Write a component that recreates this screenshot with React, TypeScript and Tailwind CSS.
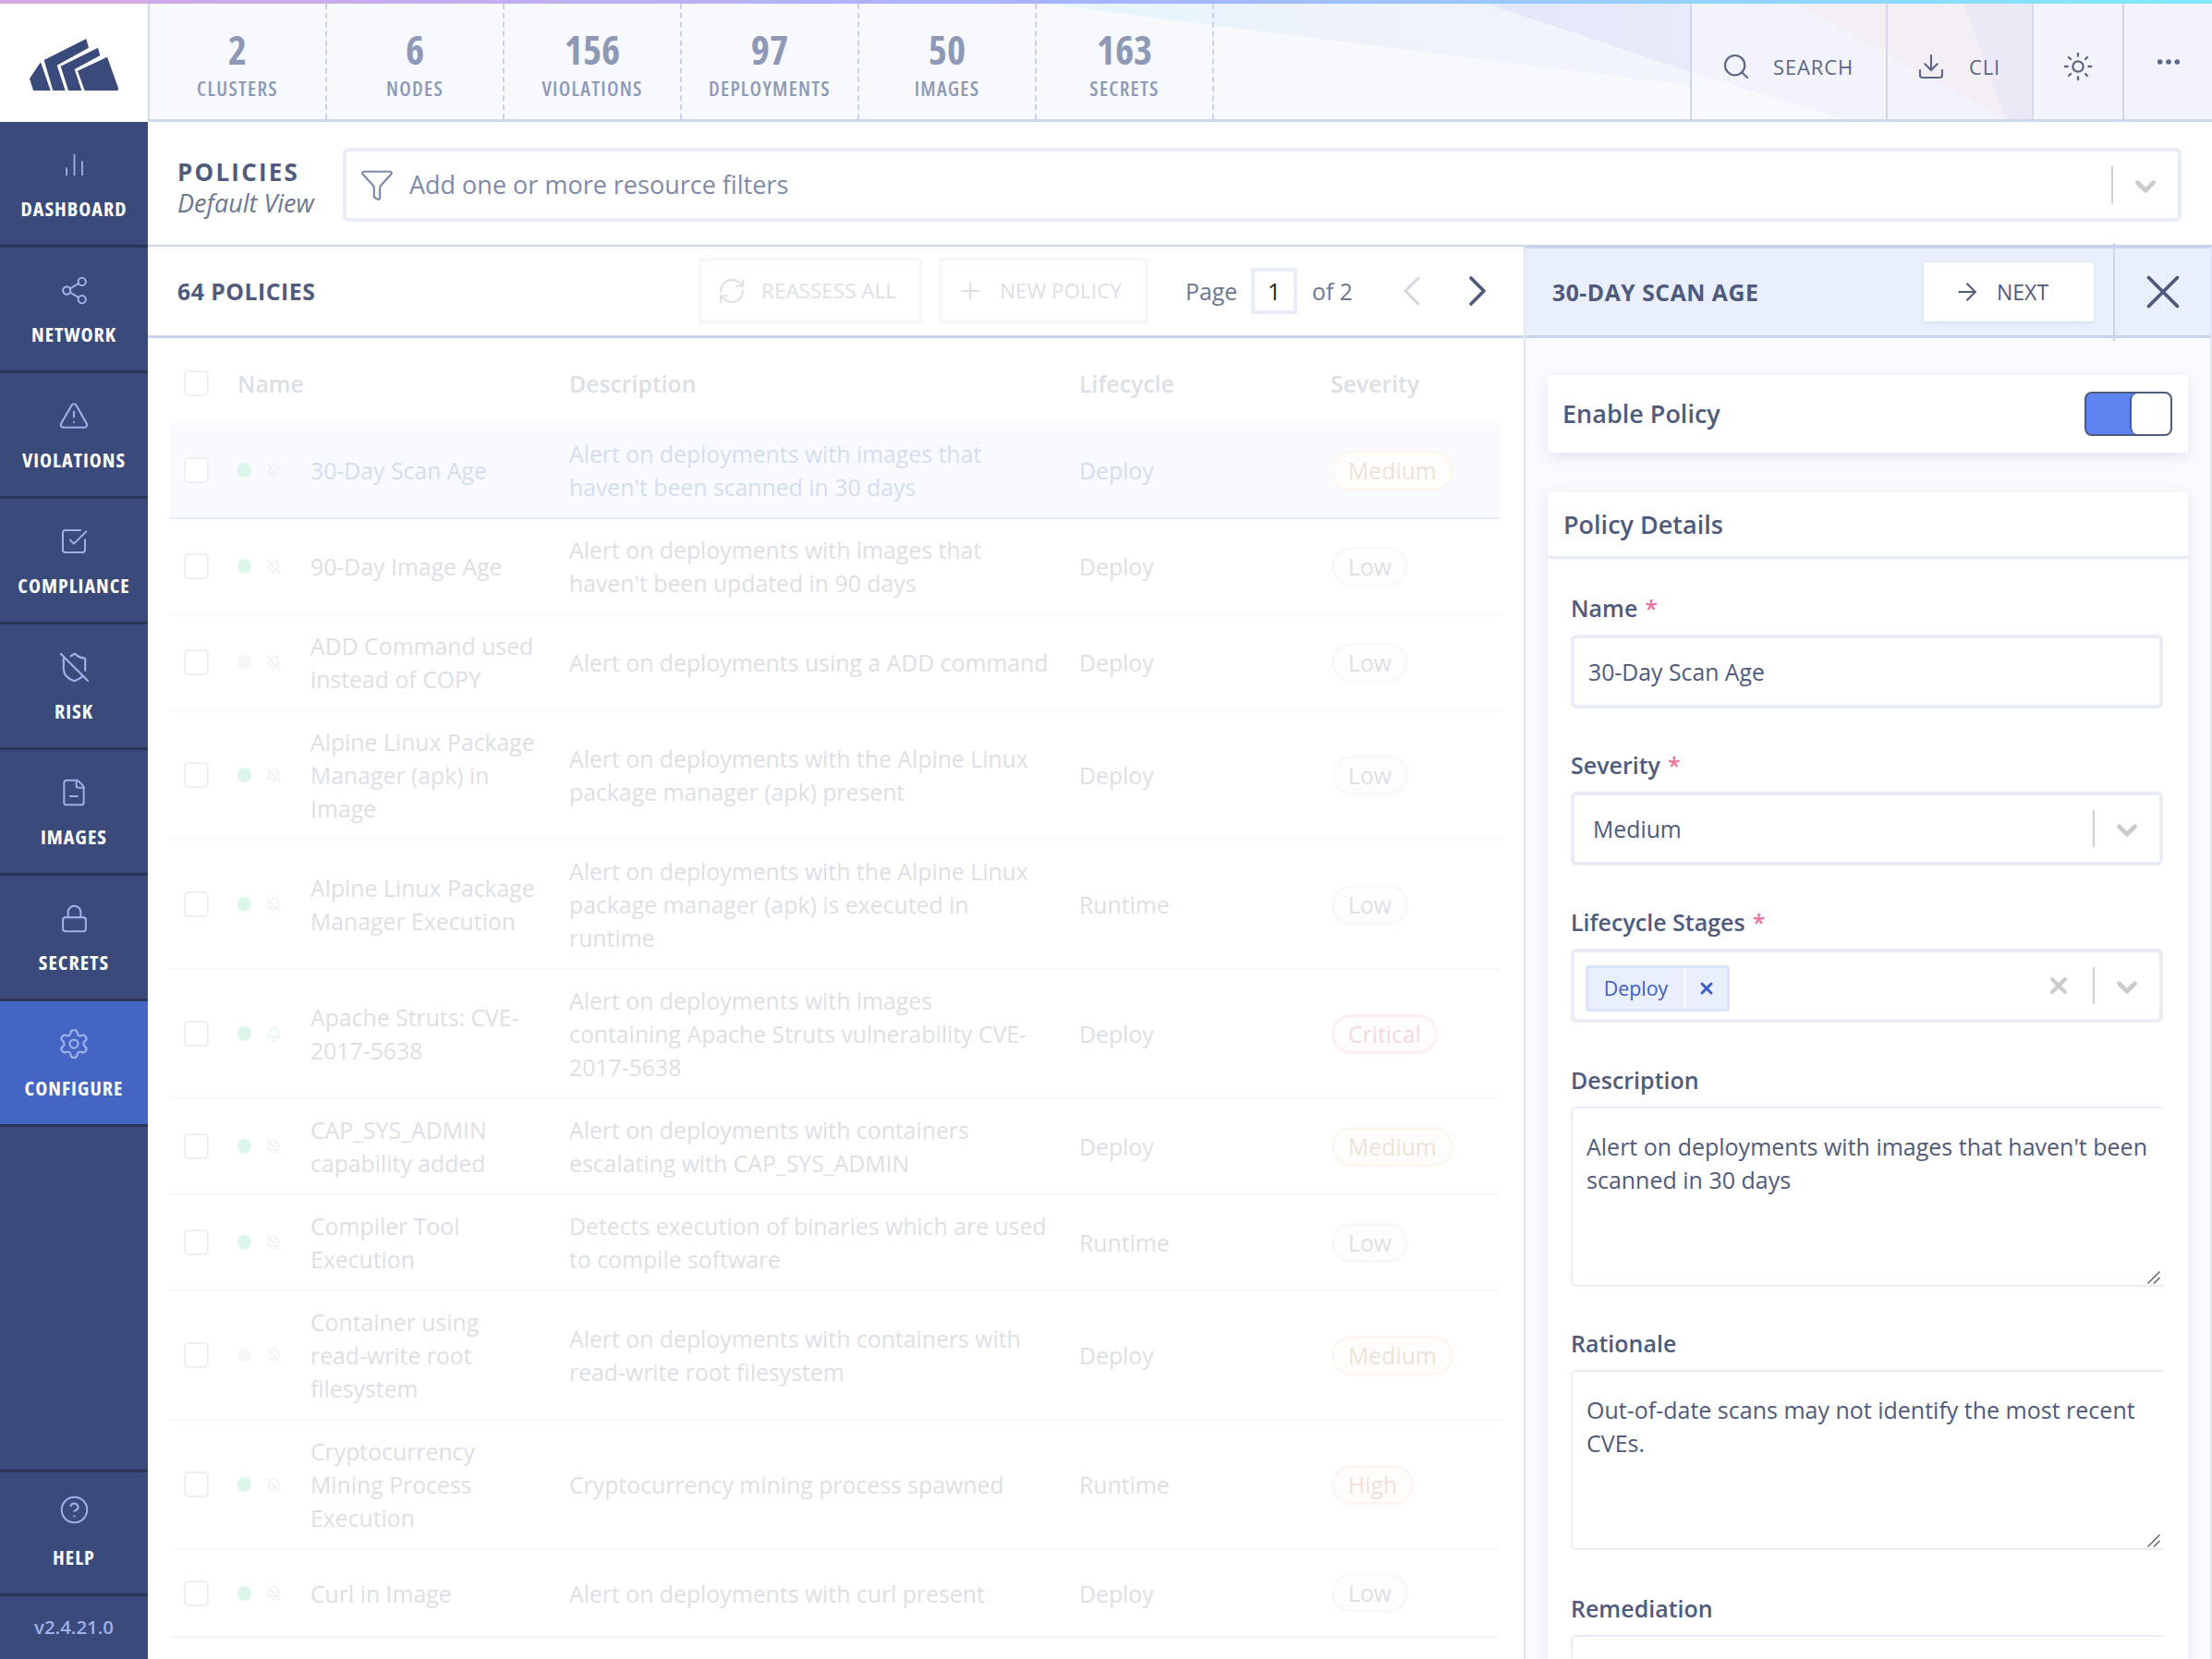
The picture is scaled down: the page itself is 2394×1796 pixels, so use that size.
import {
  ArrowRight,
  Bell,
  BellOff,
  ChartNoAxesColumn,
  ChevronDown,
  ChevronLeft,
  ChevronRight,
  CircleHelp,
  Download,
  Ellipsis,
  FileMinus,
  Funnel,
  Lock,
  Plus,
  RefreshCw,
  Search,
  Settings,
  Share2,
  ShieldOff,
  SquareCheckBig,
  Sun,
  TriangleAlert,
  X,
} from "lucide-react";

const stats = [
  ["2", "CLUSTERS"],
  ["6", "NODES"],
  ["156", "VIOLATIONS"],
  ["97", "DEPLOYMENTS"],
  ["50", "IMAGES"],
  ["163", "SECRETS"],
];

const navItems = [
  { label: "DASHBOARD", icon: ChartNoAxesColumn, size: 29 },
  { label: "NETWORK", icon: Share2, size: 33 },
  { label: "VIOLATIONS", icon: TriangleAlert, size: 34 },
  { label: "COMPLIANCE", icon: SquareCheckBig, size: 32 },
  { label: "RISK", icon: ShieldOff, size: 35 },
  { label: "IMAGES", icon: FileMinus, size: 32 },
  { label: "SECRETS", icon: Lock, size: 33 },
  { label: "CONFIGURE", icon: Settings, size: 36, active: true },
];

type Policy = {
  name: string;
  description: string;
  lifecycle: string;
  severity: "Low" | "Medium" | "High" | "Critical";
  disabled?: boolean;
  notify?: boolean;
};

const policies: Policy[] = [
  { name: "30-Day Scan Age", description: "Alert on deployments with images that haven't been scanned in 30 days", lifecycle: "Deploy", severity: "Medium" },
  { name: "90-Day Image Age", description: "Alert on deployments with images that haven't been updated in 90 days", lifecycle: "Deploy", severity: "Low" },
  { name: "ADD Command used instead of COPY", description: "Alert on deployments using a ADD command", lifecycle: "Deploy", severity: "Low", disabled: true },
  { name: "Alpine Linux Package Manager (apk) in Image", description: "Alert on deployments with the Alpine Linux package manager (apk) present", lifecycle: "Deploy", severity: "Low" },
  { name: "Alpine Linux Package Manager Execution", description: "Alert on deployments with the Alpine Linux package manager (apk) is executed in runtime", lifecycle: "Runtime", severity: "Low" },
  { name: "Apache Struts: CVE-2017-5638", description: "Alert on deployments with images containing Apache Struts vulnerability CVE-2017-5638", lifecycle: "Deploy", severity: "Critical", notify: true },
  { name: "CAP_SYS_ADMIN capability added", description: "Alert on deployments with containers escalating with CAP_SYS_ADMIN", lifecycle: "Deploy", severity: "Medium" },
  { name: "Compiler Tool Execution", description: "Detects execution of binaries which are used to compile software", lifecycle: "Runtime", severity: "Low" },
  { name: "Container using read-write root filesystem", description: "Alert on deployments with containers with read-write root filesystem", lifecycle: "Deploy", severity: "Medium", disabled: true },
  { name: "Cryptocurrency Mining Process Execution", description: "Cryptocurrency mining process spawned", lifecycle: "Runtime", severity: "High" },
  { name: "Curl in Image", description: "Alert on deployments with curl present", lifecycle: "Deploy", severity: "Low" },
];

const severityStyles = {
  Low: "border-[#dfe2ea] bg-[#fafafc] text-[#5b6680]",
  Medium: "border-[#f9dcb4] bg-[#fffaf3] text-[#a0713c]",
  High: "border-[#f9d3c0] bg-[#fff8f4] text-[#c8623c]",
  Critical: "border-[#f6b4c0] bg-[#fff5f6] text-[#c84560]",
};

const Logo = () => (
  <svg viewBox="0 0 360 240" className="w-[120px] h-[80px] mt-[4px]" fill="#3a4b7b">
    <polygon points="36,165 72,112 104,204 48,204" />
    <polygon points="83,105 220,36 228,65 125,122 152,204 112,204" />
    <polygon points="137,125 258,65 265,90 182,135 205,204 162,204" />
    <polygon points="192,140 288,95 325,198 322,204 215,204" />
  </svg>
);

const HeaderShards = () => (
  <svg className="absolute inset-0 w-full h-full" viewBox="160 4 2234 128" preserveAspectRatio="none">
    <defs>
      <linearGradient id="shardA" x1="0" x2="1" y1="0" y2="0">
        <stop offset="0" stopColor="#e4f6fd" />
        <stop offset="0.45" stopColor="#eef2fb" />
        <stop offset="1" stopColor="#f3f5fc" />
      </linearGradient>
      <linearGradient id="shardB" x1="0" x2="1" y1="0" y2="0">
        <stop offset="0" stopColor="#e3e7f9" />
        <stop offset="1" stopColor="#e8ebf9" />
      </linearGradient>
    </defs>
    <polygon points="1130,4 1608,4 1830,80 1830,95" fill="url(#shardA)" />
    <polygon points="1608,4 1830,4 1830,80" fill="url(#shardB)" />
    <polygon points="1830,4 2394,4 2394,132 1996,132 1830,80" fill="#f2f3fb" />
    <polygon points="1942,4 2125,4 2171,132" fill="#f4eef5" />
    <polygon points="2125,4 2199,4 2199,132 2171,132" fill="#ebe9f5" />
  </svg>
);

const Checkbox = () => (
  <div className="w-[27px] h-[28px] shrink-0 rounded-[5px] border-2 border-[#a9b1c4] bg-white" />
);

const SelectArrow = () => (
  <div className="flex items-center shrink-0">
    <div className="w-[2px] h-[40px] bg-[#cfcfcf]" />
    <div className="w-[70px] flex justify-center pt-[4px]">
      <ChevronDown size={34} strokeWidth={3.4} className="text-[#cccccc]" />
    </div>
  </div>
);

const FieldLabel = ({ text, required }: { text: string; required?: boolean }) => (
  <div className="h-[36px] leading-[36px] text-[25px] font-semibold text-[#4f5b7c] mb-[11px]">
    {text}
    {required && <span className="ml-[8px] text-[#e8739b]">*</span>}
  </div>
);

const TextBox = ({ value }: { value: string }) => (
  <div className="relative">
    <textarea
      readOnly
      defaultValue={value}
      className="block w-full h-[195px] resize-none rounded-l-[6px] border-2 border-r-0 border-[#e7ecf7] bg-white px-[15px] pt-[23px] text-[25px] leading-[36px] text-[#4f5b7c] outline-none"
    />
    <svg viewBox="0 0 14 14" className="absolute right-[3px] bottom-[3px] w-[14px] h-[14px]" stroke="#555555" strokeWidth="1.2">
      <line x1="0.5" y1="13.5" x2="13.5" y2="0.5" />
      <line x1="7" y1="13.5" x2="13.5" y2="7" />
    </svg>
  </div>
);

const PolicyRow = ({ policy, selected }: { policy: Policy; selected?: boolean }) => (
  <div
    className={`flex items-center pl-[15px] py-[15px] min-h-[95px] border-b-2 ${
      selected ? "bg-[#e0e7fa] border-[#8aaadf] text-[#2a5bb8]" : "border-[#d8dce4] text-[#56627f]"
    }`}
  >
    <Checkbox />
    <div
      className={`ml-[31px] w-[15px] h-[16px] shrink-0 rounded-full ${
        policy.disabled ? "bg-[#d7dbe6]" : "bg-[#57dc9c]"
      }`}
    />
    <div className="ml-[16px] w-[17px] shrink-0 text-[#a9b1c4]">
      {policy.notify ? <Bell size={17} className="text-[#57dc9c]" /> : <BellOff size={17} />}
    </div>
    <div className="ml-[31px] w-[280px] shrink-0 pr-[33px]">{policy.name}</div>
    <div className="w-[552px] shrink-0 pr-[32px]">{policy.description}</div>
    <div className="w-[273px] shrink-0">{policy.lifecycle}</div>
    <div
      className={`h-[43px] leading-[37px] rounded-full border-[3px] px-[15px] ${severityStyles[policy.severity]}`}
    >
      {policy.severity}
    </div>
  </div>
);

export default function App() {
  return (
    <div className="flex flex-col w-[2394px] h-[1796px] overflow-hidden bg-white font-['Open_Sans',sans-serif] text-[24.8px] leading-[36px] text-[#4f5b7c]">
      <div className="h-[4px] shrink-0 bg-gradient-to-r from-[#d6a8e8] via-[#a5b4fa] to-[#7eeafc]" />

      {/* Top bar */}
      <header className="flex h-[128px] shrink-0">
        <div className="w-[160px] shrink-0 flex items-center justify-center bg-white">
          <Logo />
        </div>
        <div className="relative flex flex-1 bg-[#f8f9fd] border-l-[2px] border-b-[3px] border-[#d0d8ee]">
          <HeaderShards />
          {stats.map(([count, label]) => (
            <div
              key={label}
              className="relative w-[192px] flex flex-col items-center border-r-2 border-dashed border-[#c9d2ea] font-stretch-condensed"
            >
              <div className="mt-[28px] h-[44px] leading-[44px] text-[43px] font-bold text-[#8e99b7]">{count}</div>
              <div className="mt-[4px] h-[30px] leading-[30px] text-[22px] tracking-[0.057em] font-semibold text-[#8e99b7]">
                {label}
              </div>
            </div>
          ))}
          <div className="relative ml-auto flex text-[22px] text-[#5b6785]">
            <div className="w-[212px] flex items-center border-l-2 border-[#d0d8ee] pl-[32px] pt-[11px]">
              <Search size={32} strokeWidth={1.6} />
              <span className="ml-[24px] tracking-[0.04em]">SEARCH</span>
            </div>
            <div className="w-[158px] flex items-center border-l-2 border-[#d0d8ee] pl-[31px] pt-[11px]">
              <Download size={32} strokeWidth={1.6} />
              <span className="ml-[25px] tracking-[0.04em]">CLI</span>
            </div>
            <div className="w-[98px] flex items-center justify-center border-l-2 border-[#d0d8ee] pt-[11px]">
              <Sun size={34} strokeWidth={1.6} />
            </div>
            <div className="w-[97px] flex items-center justify-center border-l-2 border-[#d0d8ee] pt-[1px]">
              <Ellipsis size={32} strokeWidth={2.2} />
            </div>
          </div>
        </div>
      </header>

      <div className="flex flex-1 min-h-0">
        {/* Sidebar */}
        <nav className="flex flex-col w-[160px] shrink-0 bg-[#3a4b7b] text-white">
          {navItems.map(({ label, icon: Icon, size, active }) => (
            <div
              key={label}
              className={`h-[136px] flex flex-col items-center border-b-[3px] border-[#2b3556] ${
                active ? "bg-[#4565c4]" : ""
              }`}
            >
              <div className="mt-[28px] h-[36px] flex items-center">
                <Icon size={size} strokeWidth={1.5} className="text-[#9db0ea]" />
              </div>
              <span className="mt-[11px] text-[22px] font-bold tracking-[0.045em] font-stretch-condensed">{label}</span>
            </div>
          ))}
          <div className="mt-auto h-[134px] flex flex-col items-center border-t-[3px] border-[#2b3556]">
            <CircleHelp size={33} strokeWidth={1.5} className="mt-[24px] text-[#9db0ea]" />
            <span className="mt-[16px] text-[22px] font-bold tracking-[0.045em] font-stretch-condensed">HELP</span>
          </div>
          <div className="h-[71px] flex items-center justify-center border-t-[3px] border-[#2b3556] pb-[3px] text-[20.4px] text-[#9db0ea] font-semibold">
            v2.4.21.0
          </div>
        </nav>

        <main className="flex flex-col flex-1 min-w-0">
          {/* Page title and filter */}
          <div className="h-[135px] shrink-0 flex items-center pl-[32px] pr-[33px] pt-[3px] border-b-2 border-[#c9d4ec]">
            <div className="w-[179px] shrink-0 pt-[6px]">
              <div className="h-[34px] leading-[34px] font-bold tracking-[0.085em] text-[26px]">POLICIES</div>
              <div className="h-[34px] leading-[34px] italic text-[27px] text-[#6b7793]">Default View</div>
            </div>
            <div className="flex items-center flex-1 h-[80px] rounded-[6px] border-4 border-[#e7ecf7] bg-white pl-[14px]">
              <Funnel size={38} strokeWidth={1.4} className="text-[#7e8aa8]" />
              <span className="ml-[16px] flex-1 text-[27px] text-[#7e8aa8]">Add one or more resource filters</span>
              <SelectArrow />
            </div>
          </div>

          <div className="flex flex-1 min-h-0">
            {/* Policies table */}
            <section className="flex flex-col w-[1489px] shrink-0">
              <div className="h-[99px] shrink-0 flex items-center pl-[32px] border-b-[3px] border-[#c9d4ec]">
                <div className="w-[564px] shrink-0 font-bold tracking-[0.02em]">64 POLICIES</div>
                <div className="flex gap-[18px] opacity-20 text-[22.5px] text-[#56627f]">
                  <div className="w-[242px] h-[72px] flex items-center gap-[16px] pl-[16px] border-4 border-[#d8dae2] rounded-[3px]">
                    <RefreshCw size={32} strokeWidth={1.4} />
                    <span>REASSESS ALL</span>
                  </div>
                  <div className="w-[227px] h-[72px] flex items-center gap-[16px] pl-[14px] border-4 border-[#d8dae2] rounded-[3px]">
                    <Plus size={32} strokeWidth={1.4} />
                    <span>NEW POLICY</span>
                  </div>
                </div>
                <span className="ml-[40px] text-[#6b7793]">Page</span>
                <div className="ml-[15px] w-[50px] h-[50px] flex items-center justify-center border-4 border-[#e7ecf7] text-[#222222]">
                  1
                </div>
                <span className="ml-[16px] text-[#6b7793]">of 2</span>
                <ChevronLeft size={56} strokeWidth={1.3} className="ml-[36px] text-[#d5d8e2]" />
                <ChevronRight size={56} strokeWidth={1.6} className="ml-[15px] text-[#4f5b7c]" />
              </div>

              <div className="opacity-20 ml-[24px] mr-[25px]">
                <div className="h-[92px] flex items-center pl-[15px] pt-[6px] font-semibold text-[#56627f]">
                  <Checkbox />
                  <span className="ml-[31px] w-[359px] shrink-0">Name</span>
                  <span className="w-[552px] shrink-0">Description</span>
                  <span className="w-[272px] shrink-0">Lifecycle</span>
                  <span>Severity</span>
                </div>
                {policies.map((policy, i) => (
                  <PolicyRow key={policy.name} policy={policy} selected={i === 0} />
                ))}
              </div>
            </section>

            {/* Policy side panel */}
            <aside className="flex flex-col flex-1 min-w-0 bg-[#fafbfe] border-x-[2px] border-[#dfe5f5]">
              <div className="h-[100px] shrink-0 flex items-center bg-[#e9effc] border-y-[3px] border-[#c9d4ec] -mt-[1px]">
                <div className="flex-1 pl-[29px] font-bold tracking-[0.02em] text-[#4f5b7c]">30-DAY SCAN AGE</div>
                <div className="w-[184px] h-[64px] flex items-center gap-[17px] pl-[32px] bg-white shadow-[0_1px_4px_rgba(80,100,160,0.15)] text-[23px] text-[#4f5b7c]">
                  <ArrowRight size={30} strokeWidth={1.6} />
                  NEXT
                </div>
                <div className="ml-[21px] w-[105px] h-[106px] flex items-center justify-center border-l-2 border-[#c9d4ec]">
                  <X size={62} strokeWidth={1.5} />
                </div>
              </div>

              <div className="flex-1 min-h-0 overflow-hidden pl-[24px] pr-[24px]">
                <div className="mt-[40px] h-[84px] flex items-center justify-between pl-[16px] pr-[17px] bg-white shadow-[0_4px_14px_rgba(70,90,150,0.14)]">
                  <span className="font-semibold text-[27px]">Enable Policy</span>
                  <div className="flex w-[95px] h-[48px] rounded-[8px] border-2 border-[#4f5b7c] overflow-hidden bg-[#5f84f2]">
                    <div className="w-[47px]" />
                    <div className="flex-1 bg-white rounded-l-[8px] border-l-2 border-[#4f5b7c]" />
                  </div>
                </div>

                <div className="mt-[43px] bg-white shadow-[0_4px_14px_rgba(70,90,150,0.14)] pb-[40px]">
                  <div className="h-[72px] flex items-center pl-[17px] border-b-[3px] border-[#e7ecf7] font-semibold text-[27px]">
                    Policy Details
                  </div>
                  <div className="pl-[25px] pr-[27px] pt-[35px] flex flex-col">
                    <FieldLabel text="Name" required />
                    <div className="h-[80px] shrink-0 flex items-center rounded-[6px] border-4 border-[#e7ecf7] pl-[15px]">
                      30-Day Scan Age
                    </div>

                    <div className="mt-[43px]">
                      <FieldLabel text="Severity" required />
                      <div className="h-[80px] flex items-center justify-between rounded-[6px] border-4 border-[#e7ecf7] pl-[20px]">
                        Medium
                        <SelectArrow />
                      </div>
                    </div>

                    <div className="mt-[43px]">
                      <FieldLabel text="Lifecycle Stages" required />
                      <div className="h-[80px] flex items-center rounded-[6px] border-4 border-[#e7ecf7] pl-[12px]">
                        <div className="flex h-[50px] mt-[5px] border-[3px] border-[#d9e3fa] rounded-[3px] bg-[#e9effc] text-[#3d5cc7] text-[21.4px]">
                          <span className="w-[103px] flex items-center justify-center">Deploy</span>
                          <span className="w-[47px] flex items-center justify-center border-l-[3px] border-[#f5f8fe]">
                            <X size={20} strokeWidth={3.5} />
                          </span>
                        </div>
                        <X size={28} strokeWidth={3.5} className="ml-auto mr-[23px] text-[#cccccc]" />
                        <SelectArrow />
                      </div>
                    </div>

                    <div className="mt-[44px]">
                      <FieldLabel text="Description" />
                      <TextBox value="Alert on deployments with images that haven't been scanned in 30 days" />
                    </div>

                    <div className="mt-[43px]">
                      <FieldLabel text="Rationale" />
                      <TextBox value="Out-of-date scans may not identify the most recent CVEs." />
                    </div>

                    <div className="mt-[45px]">
                      <FieldLabel text="Remediation" />
                      <TextBox value="" />
                    </div>
                  </div>
                </div>
              </div>
            </aside>
          </div>
        </main>
      </div>
    </div>
  );
}
